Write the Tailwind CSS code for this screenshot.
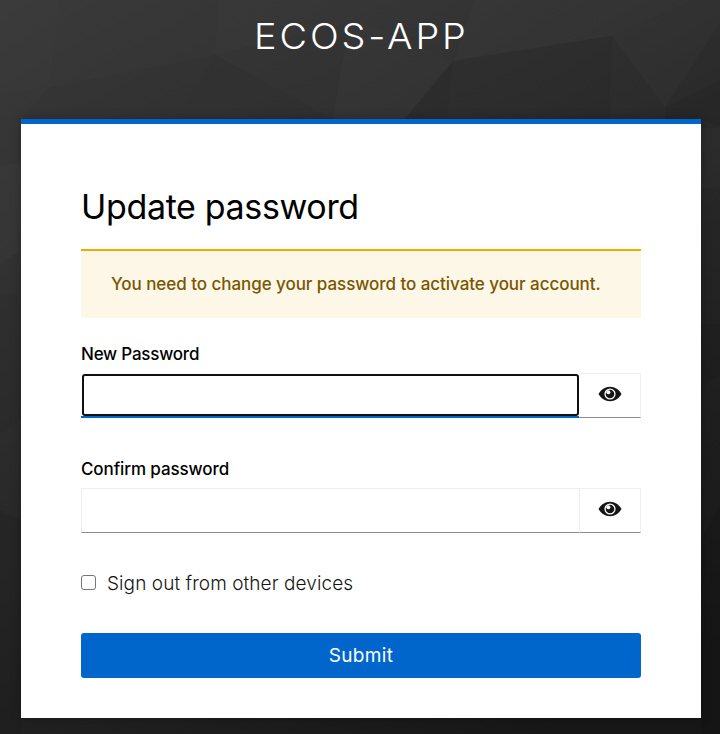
<!DOCTYPE html>
<html lang="en">
<head>
<meta charset="utf-8">
<title>ECOS-APP</title>
<script src="https://cdn.jsdelivr.net/npm/@tailwindcss/browser@4"></script>
</head>
<body class="relative h-[734px] w-[720px] overflow-hidden bg-[#2b2b2b] font-['Inter','Open_Sans',sans-serif]">
<svg class="absolute inset-0 -z-0" width="720" height="734" viewBox="0 0 720 734" aria-hidden="true">
  <defs>
    <linearGradient id="base" gradientUnits="userSpaceOnUse" x1="0" y1="0" x2="430" y2="800">
      <stop offset="0" stop-color="#3a3a3a"/><stop offset=".35" stop-color="#2f2f2f"/><stop offset=".7" stop-color="#212121"/><stop offset="1" stop-color="#171717"/>
    </linearGradient>
  </defs>
  <rect width="720" height="734" fill="url(#base)"/>
  <g fill="#fff">
    <path opacity=".006" d="M0 0H59L50 87L0 95Z"/>
    <path opacity=".01" d="M218 0H265L215 55Z"/>
    <path opacity=".01" d="M265 0H474L453 61L360 20L215 55Z"/>
    <path opacity=".018" d="M474 0H695L612 36L453 61Z"/>
    <path opacity=".015" d="M695 0H720V23L665 107L612 36Z"/>
    <path opacity=".015" d="M215 55L360 20L453 61L405 119H333Z"/>
    <path opacity=".015" d="M0 165L21 163V250L0 264Z"/>
    <path opacity=".015" d="M701 120L720 126V188H701Z"/>
  </g>
  <g fill="#000">
    <path opacity=".03" d="M50 87L215 55L175 119H20Z"/>
    <path opacity=".04" d="M215 55L350 23L333 119H175Z"/>
    <path opacity=".03" d="M453 61L612 36L610 119H405Z"/>
    <path opacity=".06" d="M665 107L720 80V128H665Z"/>
    <path opacity=".04" d="M453 61L447 119H405Z"/>
    <path opacity=".04" d="M0 293L21 295V420L0 434Z"/>
    <path opacity=".05" d="M0 510L21 520V734H0Z"/>
    <path opacity=".06" d="M701 324H720V375L701 387Z"/>
    <path opacity=".06" d="M701 540L720 505V734H701Z"/>
  </g>
</svg>
<div class="relative flex flex-col pl-[21px]">
  <header class="flex h-[119px] items-start justify-center pt-[9px] pr-[18px] text-[35px] leading-[54px] font-light text-white"><span class="inline-block scale-x-[1.08] tracking-[2.7px]">ECOS-APP</span></header>
  <main class="flex h-[599px] w-[680px] flex-col border-t-[5px] border-[#06c] bg-white px-[60px] pt-[60px] shadow-[0_0_10px_rgba(0,0,0,.25)]">
    <h1 class="h-[65px] text-[34px] leading-[46px] font-normal text-black"><span class="tracking-[-.35px]">Update password</span></h1>
    <div class="flex h-[69px] shrink-0 items-center border-t-2 border-[#f0ab00] bg-[#fdf7e7] pl-[30px] text-[17px] font-medium whitespace-nowrap text-[#795600]"><span class="tracking-[-.05px]">You need to change your password to activate your account.</span></div>
    <form class="flex flex-col pt-[25px]">
      <label class="flex h-[30px] items-start text-[17px] leading-[22px] font-medium text-black"><span class="tracking-[-.22px]">New Password</span></label>
      <div class="flex h-[45px]">
        <div class="h-full w-[498px] border-b-2 border-[#06c] pl-px pt-px"><input type="text" aria-label="New Password" class="block h-[42px] w-full rounded-[3px] border-2 border-[#101010] bg-white px-2 outline-none"></div>
        <button type="button" aria-label="Show password" class="flex w-[62px] items-center justify-center border border-l-0 border-[#f0f0f0] border-b-[#8a8d90] pb-[3px]">
          <svg width="24" height="16" viewBox="0 0 24 16"><path fill="#151515" d="M.5 8C3 3.7 7 .8 12 .8S21 3.7 23.5 8C21 12.3 17 15.2 12 15.2S3 12.3.5 8Z"/><circle cx="12" cy="8" r="5.6" fill="#fff"/><circle cx="12" cy="8" r="4.3" fill="#151515"/><circle cx="10.4" cy="6.3" r="2" fill="#fff"/></svg>
        </button>
      </div>
      <label class="mt-[40px] flex h-[30px] items-start text-[17px] leading-[22px] font-medium text-black"><span class="tracking-[-.1px]">Confirm password</span></label>
      <div class="flex h-[45px]">
        <input type="text" aria-label="Confirm password" class="h-full w-[499px] border border-[#ededed] border-b-[#8a8d90] bg-white px-2 outline-none">
        <button type="button" aria-label="Show password" class="flex w-[61px] items-center justify-center border border-l-0 border-[#f0f0f0] border-b-[#8a8d90] pb-[3px]">
          <svg width="24" height="16" viewBox="0 0 24 16"><path fill="#151515" d="M.5 8C3 3.7 7 .8 12 .8S21 3.7 23.5 8C21 12.3 17 15.2 12 15.2S3 12.3.5 8Z"/><circle cx="12" cy="8" r="5.6" fill="#fff"/><circle cx="12" cy="8" r="4.3" fill="#151515"/><circle cx="10.4" cy="6.3" r="2" fill="#fff"/></svg>
        </button>
      </div>
      <label class="mt-[35px] flex h-[30px] items-center gap-[11px] text-[19px] font-light text-[#151515]"><input type="checkbox" class="mb-[2px] size-[15px] appearance-none rounded-[3px] border border-[#767676] bg-white"><span class="pt-[2px] tracking-[.08px]">Sign out from other devices</span></label>
      <button type="submit" class="mt-[35px] flex h-[45px] items-center justify-center rounded-[3px] bg-[#06c] pt-[2px] text-[19px] font-normal text-white"><span class="tracking-[.3px]">Submit</span></button>
    </form>
  </main>
</div>
</body>
</html>
